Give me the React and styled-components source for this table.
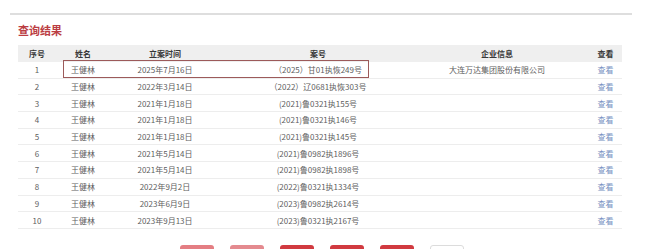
import React from 'react';
import styled, { createGlobalStyle } from 'styled-components';

/* ================= DATA ================= */

const ROWS = [
    { no: 1, name: '王健林', date: '2025年7月16日', caseNo: '（2025）甘01执恢249号', company: '大连万达集团股份有限公司' },
    { no: 2, name: '王健林', date: '2022年3月14日', caseNo: '（2022）辽0681执恢303号', company: '' },
    { no: 3, name: '王健林', date: '2021年1月18日', caseNo: '(2021)鲁0321执155号', company: '' },
    { no: 4, name: '王健林', date: '2021年1月18日', caseNo: '(2021)鲁0321执146号', company: '' },
    { no: 5, name: '王健林', date: '2021年1月18日', caseNo: '(2021)鲁0321执145号', company: '' },
    { no: 6, name: '王健林', date: '2021年5月14日', caseNo: '(2021)鲁0982执1896号', company: '' },
    { no: 7, name: '王健林', date: '2021年5月14日', caseNo: '(2021)鲁0982执1898号', company: '' },
    { no: 8, name: '王健林', date: '2022年9月2日', caseNo: '(2022)鲁0321执1334号', company: '' },
    { no: 9, name: '王健林', date: '2023年6月9日', caseNo: '(2023)鲁0982执2614号', company: '' },
    { no: 10, name: '王健林', date: '2023年9月13日', caseNo: '(2023)鲁0321执2167号', company: '' },
];

const PAGES = ['muted', 'muted2', 'active', 'active', 'active', 'plain'];

/* ================= STYLES ================= */

const GlobalStyle = createGlobalStyle`
    html, body {
        margin: 0;
        padding: 0;
        background: #fff;
        font-family: "Noto Sans CJK SC", "Noto Sans", sans-serif;
    }
`;

const Page = styled.div`
    width: 650px;
    height: 249px;
    overflow: hidden;
    padding-top: 13px;
    box-sizing: border-box;
`;

const Divider = styled.div`
    height: 2px;
    margin: 0 18px 0 10px;
    background: #dedede;
`;

const Section = styled.div`
    padding: 8px 28px 0 18px;
`;

const Title = styled.h2`
    margin: 0 0 7px;
    font-size: 11px;
    line-height: 15px;
    font-weight: 700;
    color: #bb3d43;
`;

const Table = styled.div`
    position: relative;
`;

const Row = styled.div`
    display: grid;
    grid-template-columns: 38px 54px 110px 196px 162px 1fr;
    height: ${p => (p.$head ? '17px' : '16.7px')};
    background: ${p => (p.$head ? '#efefef' : '#fff')};
    border-bottom: ${p => (p.$head ? 'none' : '1px solid #ededed')};
    box-sizing: border-box;
`;

const Cell = styled.div`
    display: flex;
    align-items: center;
    justify-content: center;
    font-size: 8px;
    white-space: nowrap;
    font-weight: ${p => (p.$head ? 700 : 400)};
    color: ${p => (p.$head ? '#383838' : '#606060')};
    padding-left: ${p => (p.$shift ? '11px' : '0')};
`;

const ViewLink = styled.a`
    color: #7590c2;
    text-decoration: none;
    font-size: 8px;
`;

/* annotation box drawn over the first row */
const Highlight = styled.div`
    position: absolute;
    left: 45px;
    top: 15px;
    width: 306px;
    height: 18px;
    border: 1px solid #9c5a5a;
    box-sizing: border-box;
    pointer-events: none;
`;

const Pager = styled.div`
    display: flex;
    justify-content: center;
    gap: 16px;
    margin-top: 16px;
    padding-left: 3px;
`;

const PageBtn = styled.div`
    width: 34px;
    height: 22px;
    border-radius: 3px;
    box-sizing: border-box;
    background: ${p =>
        p.$kind === 'muted' ? '#e47e83'
            : p.$kind === 'muted2' ? '#e48a8f'
                : p.$kind === 'active' ? '#d13a40'
                    : '#fff'};
    border: 1px solid ${p => (p.$kind === 'plain' ? '#dcdcdc' : 'transparent')};
`;

const App = () => {
    return (
        <Page>
            <GlobalStyle />
            <Divider />
            <Section>
                <Title>查询结果</Title>
                <Table>
                    <Row $head>
                        <Cell $head>序号</Cell>
                        <Cell $head>姓名</Cell>
                        <Cell $head>立案时间</Cell>
                        <Cell $head>案号</Cell>
                        <Cell $head>企业信息</Cell>
                        <Cell $head $shift>查看</Cell>
                    </Row>
                    {ROWS.map(r => (
                        <Row key={r.no}>
                            <Cell>{r.no}</Cell>
                            <Cell>{r.name}</Cell>
                            <Cell>{r.date}</Cell>
                            <Cell>{r.caseNo}</Cell>
                            <Cell>{r.company}</Cell>
                            <Cell $shift><ViewLink href="#">查看</ViewLink></Cell>
                        </Row>
                    ))}
                    <Highlight />
                </Table>
                <Pager>
                    {PAGES.map((k, i) => (
                        <PageBtn key={i} $kind={k} />
                    ))}
                </Pager>
            </Section>
        </Page>
    );
};

export default App;
